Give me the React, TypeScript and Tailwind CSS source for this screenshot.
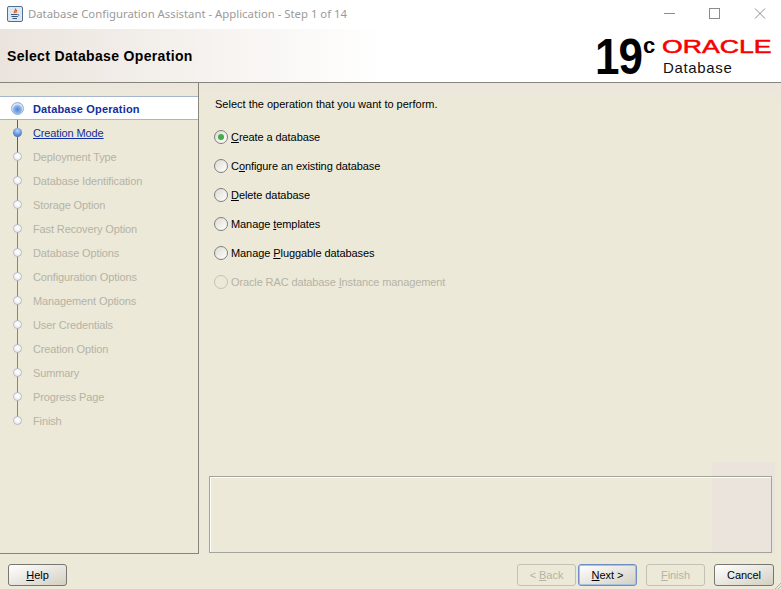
import React from "react";

const steps = [
  "Database Operation",
  "Creation Mode",
  "Deployment Type",
  "Database Identification",
  "Storage Option",
  "Fast Recovery Option",
  "Database Options",
  "Configuration Options",
  "Management Options",
  "User Credentials",
  "Creation Option",
  "Summary",
  "Progress Page",
  "Finish",
];

function JavaIcon() {
  return (
    <svg width="16" height="16" viewBox="0 0 16 16">
      <rect x="0.5" y="0.5" width="15" height="15" rx="1.5" fill="#dfe8f2" stroke="#4f6f94" />
      <path d="M8.5 2.5c1 1.5-2 2.5-1 4.5M10 4c-1 1-1.5 1.500-1 3" fill="none" stroke="#d9541e" strokeWidth="1.200" />
      <path d="M4 8.500h6.500M4.500 10.500h6M5.500 12.500h4.500" stroke="#35587f" strokeWidth="1" />
      <path d="M10.500 8.500c1.500-.5 2 1.500 0 2" fill="none" stroke="#35587f" strokeWidth="0.800" />
    </svg>
  );
}

function WindowButtons() {
  return (
    <div className="flex items-center h-full pr-[3px]">
      <svg width="46" height="29" viewBox="0 0 46 29">
        <path d="M18 13.500h11" stroke="#8c8c8c" strokeWidth="1" />
      </svg>
      <svg width="46" height="29" viewBox="0 0 46 29">
        <rect x="17.500" y="8.500" width="10" height="10" fill="none" stroke="#8c8c8c" />
      </svg>
      <svg width="40" height="29" viewBox="0 0 40 29">
        <path d="M17 8.500l10 10M27 8.500l-10 10" stroke="#8c8c8c" strokeWidth="1" />
      </svg>
    </div>
  );
}

function StepNode({ state }: { state: "current" | "next" | "idle" }) {
  if (state === "current") {
    return (
      <div className="w-[13px] h-[13px] rounded-full bg-[radial-gradient(circle_at_50%_60%,#4f86dc_0%,#8fb4ea_45%,#e4eefa_65%,#8faed0_100%)] border border-[#8fb0d2]" />
    );
  }
  if (state === "next") {
    return (
      <div className="w-[9px] h-[9px] rounded-full bg-[radial-gradient(circle_at_50%_30%,#c0d6f6_0%,#5f8fdc_55%,#2f5fb0_100%)]" />
    );
  }
  return (
    <div className="w-[9px] h-[9px] rounded-full border border-[#b9bcc2] bg-[radial-gradient(circle_at_50%_35%,#ffffff_0%,#f2f4f6_60%,#d3d6da_100%)]" />
  );
}

function Stepper() {
  return (
    <div className="w-[199px] shrink-0 border-r border-b border-[#85857d] pt-[13px] bg-gradient-to-b from-[#ece6dd] to-[#ece9d8] to-[14px] relative">
      <div className="absolute left-[17px] top-[26px] w-px h-[48px] bg-[#3f62a8]" />
      <div className="absolute left-[17px] top-[74px] w-px h-[264px] bg-[#85858a]" />
      {steps.map((s, i) => {
        const current = i === 0;
        const next = i === 1;
        return (
          <div
            key={s}
            className={
              current
                ? "relative h-6 flex items-center bg-white border-y border-[#a5b5cc]"
                : "relative h-6 flex items-center"
            }
          >
            <div className="w-[33px] flex justify-center pl-px">
              <StepNode state={current ? "current" : next ? "next" : "idle"} />
            </div>
            <span
              className={
                current
                  ? "text-[11px] font-bold text-[#0f2f9c] tracking-[0.15px] pt-[2px]"
                  : next
                  ? "text-[11px] text-[#0f2f9c] underline tracking-[-0.12px] mt-[2px]"
                  : "text-[11px] text-[#b5b3a5] tracking-[-0.12px] pt-[2px]"
              }
            >
              {s}
            </span>
          </div>
        );
      })}
    </div>
  );
}

function Radio({ checked, disabled }: { checked?: boolean; disabled?: boolean }) {
  return (
    <div
      className={
        disabled
          ? "w-[14px] h-[14px] mt-[-1px] rounded-full border border-[#c4c2b6] bg-[#ece9d8] flex items-center justify-center"
          : "w-[14px] h-[14px] mt-[-1px] rounded-full border border-[#7f7f7f] bg-gradient-to-br from-[#dedbd0] to-white flex items-center justify-center"
      }
    >
      {checked && <div className="w-[6px] h-[6px] rounded-full bg-[#3fae49]" />}
    </div>
  );
}

function Option({ children, checked, disabled }: { children: React.ReactNode; checked?: boolean; disabled?: boolean }) {
  return (
    <div className="h-[29px] flex items-center gap-[3px] ml-[-1px]">
      <Radio checked={checked} disabled={disabled} />
      <span className={disabled ? "text-[11px] text-[#b5b3a5] tracking-[-0.12px]" : "text-[11px] text-black tracking-[-0.08px]"}>
        {children}
      </span>
    </div>
  );
}

function WizButton({
  children,
  disabled,
  primary,
  className,
}: {
  children: React.ReactNode;
  disabled?: boolean;
  primary?: boolean;
  className: string;
}) {
  let look =
    "border-[#77776f] bg-gradient-to-br from-white to-[#d3cfc2] text-black";
  if (disabled) look = "border-[#c2c1b3] bg-[#ece9d8] text-[#b5b3a5]";
  if (primary)
    look =
      "border-[#6f8fc4] shadow-[inset_0_0_0_1px_#a9c0e4] bg-gradient-to-br from-white to-[#d3cfc2] text-black";
  return (
    <div
      className={
        "h-[22px] rounded-[3px] border flex items-center justify-center text-[11px] tracking-[-0.05px] " +
        look +
        " " +
        className
      }
    >
      {children}
    </div>
  );
}

export default function App() {
  return (
    <div className="w-[781px] h-[589px] flex flex-col overflow-hidden bg-[#ece9d8] font-['Liberation_Sans',sans-serif]">
      <div className="h-[29px] shrink-0 bg-white flex items-center justify-between">
        <div className="flex items-center pl-[7px] gap-[5px]">
          <JavaIcon />
          <span className="text-[11.33px] text-[#9a9a9a] font-['Noto_Sans',sans-serif]">
            Database Configuration Assistant - Application - Step 1 of 14
          </span>
        </div>
        <WindowButtons />
      </div>

      <div className="h-[54px] shrink-0 border-b border-[#85857d] bg-gradient-to-r from-[#ebe4dd] to-white to-[49%] flex items-center justify-between pl-[7px] pr-[9px]">
        <h1 className="text-[14px] font-bold text-black tracking-[0.33px] mt-[1px]">Select Database Operation</h1>
        <div className="flex items-start self-start mt-[6px]">
          <span className="w-[47px] ml-px text-[50px] leading-[50px] font-bold text-black tracking-[-1px] mt-[-3px] scale-x-[.88] origin-left">
            19
          </span>
          <span className="w-[12px] ml-px text-[22px] leading-[22px] font-bold text-black">c</span>
          <div className="flex flex-col ml-[7px] mt-[4px]">
            <span className="h-[16px] w-[110px] text-[18px] leading-[16px] text-[#f80000] whitespace-nowrap scale-x-[1.48] origin-left [-webkit-text-stroke:0.5px_#f80000]">
              ORACLE
            </span>
            <span className="text-[15px] leading-[18px] text-[#111] mt-[4px] ml-px tracking-[0.65px]">Database</span>
          </div>
        </div>
      </div>

      <div className="flex flex-1 min-h-0">
        <Stepper />
        <div className="relative flex-1 flex flex-col pl-[16px] pr-[9px] pt-[13px] pb-[1px] bg-gradient-to-b from-[#ece6dd] to-[#ece9d8] to-[20px]">
          <div className="absolute left-[513px] right-[6px] top-[379px] bottom-0 bg-[#ebe4dd]" />
          <p className="relative text-[11px] text-black leading-[16px] h-[27px]">Select the operation that you want to perform.</p>
          <Option checked><u>C</u>reate a database</Option>
          <Option>C<u>o</u>nfigure an existing database</Option>
          <Option><u>D</u>elete database</Option>
          <Option>Manage <u>t</u>emplates</Option>
          <Option>Manage <u>P</u>luggable databases</Option>
          <Option disabled>Oracle RAC database <u>I</u>nstance management</Option>
          <div className="relative mt-auto ml-[-6px] h-[77px] border border-[#a3a39a] shadow-[inset_1px_1px_0_#ffffff]" />
        </div>
      </div>

      <div className="relative h-[35px] shrink-0 flex items-start pt-[10px] pl-[8px] pr-[7px]">
        <WizButton className="w-[59px]"><span><u>H</u>elp</span></WizButton>
        <div className="ml-auto flex">
          <WizButton disabled className="w-[59px]"><span>&lt; <u>B</u>ack</span></WizButton>
          <WizButton primary className="w-[59px] ml-[2px]"><span><u>N</u>ext &gt;</span></WizButton>
          <WizButton disabled className="w-[59px] ml-[9px]"><span><u>F</u>inish</span></WizButton>
          <WizButton className="w-[60px] ml-[9px]">Cancel</WizButton>
        </div>
        <svg className="absolute right-0 bottom-0" width="6" height="6" viewBox="0 0 6 6">
          <path d="M0 6L6 0M3 6L6 3" stroke="#b5b3a5" strokeWidth="1" />
        </svg>
      </div>
    </div>
  );
}
